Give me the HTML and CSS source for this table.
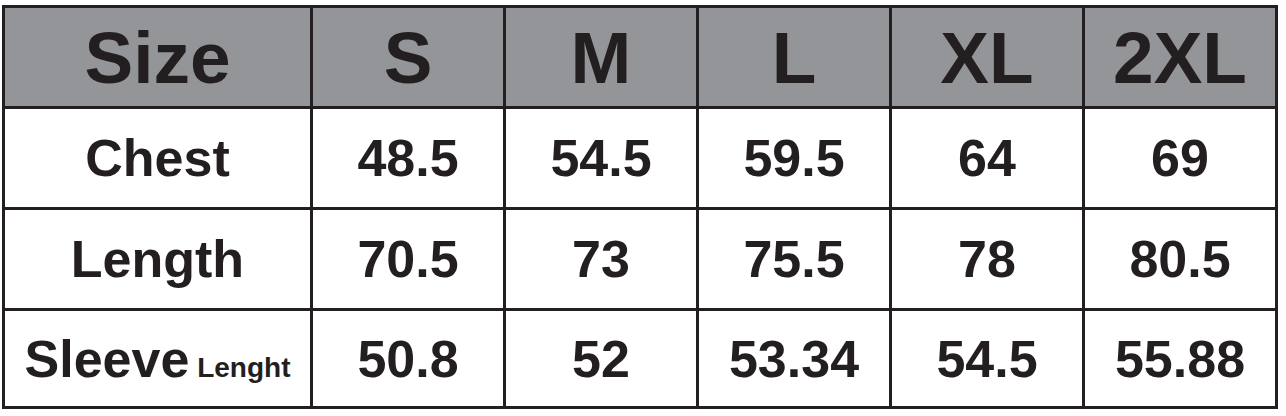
FILE: index.html
```html
<!DOCTYPE html>
<html>
<head>
<meta charset="utf-8">
<link rel="stylesheet" href="styles.css">
</head>
<body>
<div class="chart">
  <div class="cell head">Size</div>
  <div class="cell head">S</div>
  <div class="cell head">M</div>
  <div class="cell head">L</div>
  <div class="cell head">XL</div>
  <div class="cell head">2XL</div>

  <div class="cell">Chest</div>
  <div class="cell">48.5</div>
  <div class="cell">54.5</div>
  <div class="cell">59.5</div>
  <div class="cell">64</div>
  <div class="cell">69</div>

  <div class="cell">Length</div>
  <div class="cell">70.5</div>
  <div class="cell">73</div>
  <div class="cell">75.5</div>
  <div class="cell">78</div>
  <div class="cell">80.5</div>

  <div class="cell"><span>Sleeve<small class="sub"> Lenght</small></span></div>
  <div class="cell">50.8</div>
  <div class="cell">52</div>
  <div class="cell">53.34</div>
  <div class="cell">54.5</div>
  <div class="cell">55.88</div>
</div>
</body>
</html>
```
FILE: styles.css
```css
html, body {
  margin: 0;
  padding: 0;
  background: #ffffff;
}
body {
  padding: 5px 0 0 2px;
  font-family: "Liberation Sans", Arial, sans-serif;
  color: #231f20;
}
.chart {
  display: grid;
  width: 1270px;
  grid-template-columns: 305px repeat(5, 190px);
  grid-template-rows: 98px 98px 98px 95px;
  gap: 3px;
  padding: 3px;
  background: #231f20;
}
.cell {
  background: #ffffff;
  display: flex;
  align-items: center;
  justify-content: center;
  font-weight: bold;
  font-size: 52px;
  line-height: 1;
}
.cell.head {
  background: #939598;
  font-size: 73px;
}
.sub {
  font-size: 28px;
  font-weight: bold;
}
```
